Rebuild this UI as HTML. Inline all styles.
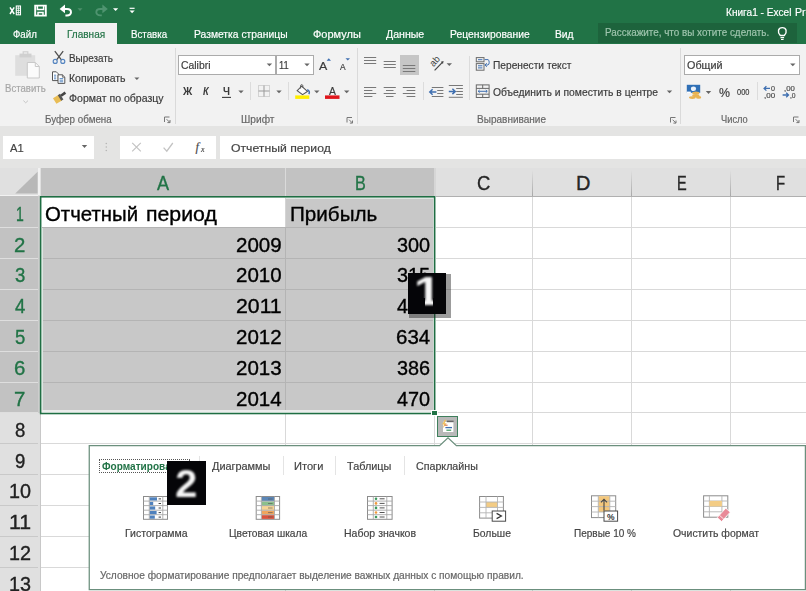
<!DOCTYPE html>
<html lang="ru"><head><meta charset="utf-8"><title>Excel</title>
<style>
html,body{margin:0;padding:0;}
body{width:806px;height:591px;overflow:hidden;background:#fff;font-family:"Liberation Sans",sans-serif;}
#root{position:relative;width:806px;height:591px;overflow:hidden;background:#fff;}
.t{position:absolute;white-space:nowrap;line-height:1;transform-origin:0 50%;font-family:"Liberation Sans",sans-serif;}
.b{position:absolute;}
svg{position:absolute;left:0;top:0;overflow:visible;}
.n{position:absolute;font-family:"Liberation Sans",sans-serif;font-weight:bold;font-size:40px;line-height:1;color:#f6f6f6;filter:blur(.9px);}

</style></head><body>
<div id="root">
<div class="b" style="left:0.00px;top:0.00px;width:806.00px;height:44.00px;background:#217346;"></div>
<div class="b" style="left:54.50px;top:23.00px;width:62.50px;height:21.50px;background:#f2f2f2;"></div>
<div class="b" style="left:598.00px;top:23.00px;width:198.50px;height:20.00px;background:#1d633c;"></div>
<div class="b" style="left:0.00px;top:44.00px;width:806.00px;height:82.00px;background:#f2f2f2;"></div>
<div class="b" style="left:0.00px;top:126.00px;width:806.00px;height:42.00px;background:#e4e4e3;"></div>
<div class="b" style="left:174.50px;top:48.00px;width:1.00px;height:76.00px;background:#dadada;"></div>
<div class="b" style="left:356.60px;top:48.00px;width:1.00px;height:76.00px;background:#dadada;"></div>
<div class="b" style="left:679.70px;top:48.00px;width:1.00px;height:76.00px;background:#dadada;"></div>
<div class="b" style="left:250.40px;top:82.00px;width:1.00px;height:18.00px;background:#dcdcdc;"></div>
<div class="b" style="left:288.40px;top:82.00px;width:1.00px;height:18.00px;background:#dcdcdc;"></div>
<div class="b" style="left:422.70px;top:82.00px;width:1.00px;height:18.00px;background:#dcdcdc;"></div>
<div class="b" style="left:469.00px;top:56.00px;width:1.00px;height:44.00px;background:#dcdcdc;"></div>
<div class="b" style="left:757.00px;top:82.00px;width:1.00px;height:18.00px;background:#dcdcdc;"></div>
<div class="b" style="left:178.00px;top:55.00px;width:97.50px;height:19.50px;background:#fff;box-sizing:border-box;border:1px solid #ababab;"></div>
<div class="b" style="left:276.00px;top:55.00px;width:37.50px;height:19.50px;background:#fff;box-sizing:border-box;border:1px solid #ababab;"></div>
<div class="b" style="left:684.30px;top:55.00px;width:115.70px;height:19.80px;background:#fff;box-sizing:border-box;border:1px solid #ababab;"></div>
<div class="b" style="left:399.60px;top:55.00px;width:19.00px;height:19.50px;background:#c6c6c6;"></div>
<div class="b" style="left:3.00px;top:136.00px;width:91.00px;height:22.50px;background:#fff;"></div>
<div class="b" style="left:120.00px;top:136.00px;width:96.00px;height:22.50px;background:#fff;"></div>
<div class="b" style="left:219.60px;top:136.00px;width:590.00px;height:22.50px;background:#fff;"></div>
<div class="b" style="left:0.00px;top:168.00px;width:806.00px;height:28.00px;background:#e0e0e0;"></div>
<div class="b" style="left:0.00px;top:196.00px;width:40.00px;height:400.00px;background:#e0e0e0;"></div>
<div class="b" style="left:38.20px;top:168.00px;width:2.30px;height:27.00px;background:#f2f2f2;"></div>
<div class="b" style="left:0.00px;top:194.80px;width:38.20px;height:1.20px;background:#f2f2f2;"></div>
<div class="b" style="left:40.50px;top:168.00px;width:393.60px;height:28.00px;background:#c2c2c2;"></div>
<div class="b" style="left:285.20px;top:168.00px;width:1.00px;height:28.00px;background:#dadada;"></div>
<div class="b" style="left:532.30px;top:170.00px;width:1.00px;height:26.00px;background:linear-gradient(#e0e0e0,#a8a8a8);"></div>
<div class="b" style="left:631.00px;top:170.00px;width:1.00px;height:26.00px;background:linear-gradient(#e0e0e0,#a8a8a8);"></div>
<div class="b" style="left:730.00px;top:170.00px;width:1.00px;height:26.00px;background:linear-gradient(#e0e0e0,#a8a8a8);"></div>
<div class="b" style="left:434.30px;top:168.00px;width:1.40px;height:28.00px;background:#d6d6d6;"></div>
<div class="b" style="left:435.50px;top:196.00px;width:371.00px;height:1.30px;background:#b0b0b0;"></div>
<div class="b" style="left:0.00px;top:196.00px;width:38.20px;height:217.00px;background:#c2c2c2;"></div>
<div class="b" style="left:38.20px;top:196.00px;width:2.00px;height:217.00px;background:#cdcdcd;"></div>
<div class="b" style="left:39.50px;top:413.00px;width:1.00px;height:180.00px;background:#c8c8c8;"></div>
<div class="b" style="left:0.00px;top:227.27px;width:38.20px;height:1.00px;background:#dedede;"></div>
<div class="b" style="left:0.00px;top:258.14px;width:38.20px;height:1.00px;background:#dedede;"></div>
<div class="b" style="left:0.00px;top:289.01px;width:38.20px;height:1.00px;background:#dedede;"></div>
<div class="b" style="left:0.00px;top:319.88px;width:38.20px;height:1.00px;background:#dedede;"></div>
<div class="b" style="left:0.00px;top:350.75px;width:38.20px;height:1.00px;background:#dedede;"></div>
<div class="b" style="left:0.00px;top:381.62px;width:38.20px;height:1.00px;background:#dedede;"></div>
<div class="b" style="left:0.00px;top:412.49px;width:38.20px;height:1.00px;background:#dedede;"></div>
<div class="b" style="left:0.00px;top:443.36px;width:38.20px;height:1.00px;background:#c9c9c9;"></div>
<div class="b" style="left:0.00px;top:474.23px;width:38.20px;height:1.00px;background:#c9c9c9;"></div>
<div class="b" style="left:0.00px;top:505.10px;width:38.20px;height:1.00px;background:#c9c9c9;"></div>
<div class="b" style="left:0.00px;top:535.97px;width:38.20px;height:1.00px;background:#c9c9c9;"></div>
<div class="b" style="left:0.00px;top:566.84px;width:38.20px;height:1.00px;background:#c9c9c9;"></div>
<div class="b" style="left:0.00px;top:597.71px;width:38.20px;height:1.00px;background:#c9c9c9;"></div>
<div class="b" style="left:40.50px;top:197.00px;width:766.00px;height:394.00px;background:#fff;"></div>
<div class="b" style="left:41.50px;top:198.00px;width:391.00px;height:212.50px;background:#c8c8c8;"></div>
<div class="b" style="left:41.50px;top:198.00px;width:243.70px;height:29.20px;background:#fff;"></div>
<div class="b" style="left:41.50px;top:227.27px;width:391.00px;height:1.00px;background:#b4b4b4;"></div>
<div class="b" style="left:435.50px;top:227.27px;width:371.00px;height:1.00px;background:#d9d9d9;"></div>
<div class="b" style="left:41.50px;top:258.14px;width:391.00px;height:1.00px;background:#b4b4b4;"></div>
<div class="b" style="left:435.50px;top:258.14px;width:371.00px;height:1.00px;background:#d9d9d9;"></div>
<div class="b" style="left:41.50px;top:289.01px;width:391.00px;height:1.00px;background:#b4b4b4;"></div>
<div class="b" style="left:435.50px;top:289.01px;width:371.00px;height:1.00px;background:#d9d9d9;"></div>
<div class="b" style="left:41.50px;top:319.88px;width:391.00px;height:1.00px;background:#b4b4b4;"></div>
<div class="b" style="left:435.50px;top:319.88px;width:371.00px;height:1.00px;background:#d9d9d9;"></div>
<div class="b" style="left:41.50px;top:350.75px;width:391.00px;height:1.00px;background:#b4b4b4;"></div>
<div class="b" style="left:435.50px;top:350.75px;width:371.00px;height:1.00px;background:#d9d9d9;"></div>
<div class="b" style="left:41.50px;top:381.62px;width:391.00px;height:1.00px;background:#b4b4b4;"></div>
<div class="b" style="left:435.50px;top:381.62px;width:371.00px;height:1.00px;background:#d9d9d9;"></div>
<div class="b" style="left:435.50px;top:412.49px;width:371.00px;height:1.00px;background:#d9d9d9;"></div>
<div class="b" style="left:40.50px;top:443.36px;width:766.00px;height:1.00px;background:#d9d9d9;"></div>
<div class="b" style="left:40.50px;top:474.23px;width:766.00px;height:1.00px;background:#d9d9d9;"></div>
<div class="b" style="left:40.50px;top:505.10px;width:766.00px;height:1.00px;background:#d9d9d9;"></div>
<div class="b" style="left:40.50px;top:535.97px;width:766.00px;height:1.00px;background:#d9d9d9;"></div>
<div class="b" style="left:40.50px;top:566.84px;width:766.00px;height:1.00px;background:#d9d9d9;"></div>
<div class="b" style="left:40.50px;top:597.71px;width:766.00px;height:1.00px;background:#d9d9d9;"></div>
<div class="b" style="left:285.20px;top:227.27px;width:1.00px;height:183.00px;background:#b4b4b4;"></div>
<div class="b" style="left:285.20px;top:414.00px;width:1.00px;height:180.00px;background:#d9d9d9;"></div>
<div class="b" style="left:285.20px;top:198.00px;width:1.00px;height:29.20px;background:#d4d4d4;"></div>
<div class="b" style="left:532.20px;top:197.00px;width:1.00px;height:394.00px;background:#d9d9d9;"></div>
<div class="b" style="left:631.00px;top:197.00px;width:1.00px;height:394.00px;background:#d9d9d9;"></div>
<div class="b" style="left:730.00px;top:197.00px;width:1.00px;height:394.00px;background:#d9d9d9;"></div>
<div class="b" style="left:433.60px;top:415.00px;width:1.00px;height:180.00px;background:#d9d9d9;"></div>
<div class="b" style="left:432.50px;top:198.00px;width:1.10px;height:213.00px;background:#e9e9e9;"></div>
<div class="b" style="left:41.50px;top:410.30px;width:392.00px;height:1.60px;background:#ececec;"></div>
<div class="b" style="left:286.20px;top:198.00px;width:146.50px;height:1.00px;background:#dde6e1;"></div>
<div class="b" style="left:41.50px;top:228.27px;width:1.00px;height:182.00px;background:#dde6e1;"></div>
<svg width="806" height="591" viewBox="0 0 806 591"><rect x="40.65" y="196.8" width="394" height="216.7" fill="none" stroke="#1f6e43" stroke-width="1.6"/></svg>
<div class="b" style="left:431.00px;top:410.00px;width:6.60px;height:6.20px;background:#fff;"></div>
<div class="b" style="left:432.10px;top:411.00px;width:4.50px;height:4.20px;background:#217346;"></div>
<div class="b" style="left:437.30px;top:416.20px;width:20.70px;height:21.00px;background:#b9b9b9;box-sizing:border-box;border:1.8px solid #3f7f5c;"></div>
<svg width="806" height="591" viewBox="0 0 806 591"><path d="M89.25 445.7 H439.6 L448 437.8 L456.4 445.7 H805.4 V589.6 H89.25 Z" fill="#fff" stroke="#6b8f7d" stroke-width="1.25"/></svg>
<div class="b" style="left:198.80px;top:455.50px;width:1.00px;height:19.00px;background:#e4e4e4;"></div>
<div class="b" style="left:282.60px;top:455.50px;width:1.00px;height:19.00px;background:#e4e4e4;"></div>
<div class="b" style="left:334.70px;top:455.50px;width:1.00px;height:19.00px;background:#e4e4e4;"></div>
<div class="b" style="left:403.60px;top:455.50px;width:1.00px;height:19.00px;background:#e4e4e4;"></div>
<div class="b" style="left:99.40px;top:458.60px;width:90.60px;height:14.40px;background:transparent;box-sizing:border-box;border:1px dotted #555;"></div><svg width="806" height="591" viewBox="0 0 806 591">
<!-- ===== quick access toolbar ===== -->
<g fill="none" stroke="#fff">
  <!-- excel logo -->
  <path d="M10 7.3 L14.2 14 M14.2 7.3 L10 14" stroke-width="1.5"/>
  <rect x="16.3" y="6" width="4.2" height="8.8" stroke-width="1.1"/>
  <path d="M16.3 8.2h4.2M16.3 10.4h4.2M16.3 12.6h4.2M18.4 6v8.8" stroke-width="0.8"/>
  <!-- save -->
  <path d="M35.2 5.6 H45.8 V15.6 H35.2 Z" stroke-width="1.9"/>
  <path d="M37.4 5.5 V9.4 H43.6 V5.5" stroke-width="1.5"/>
  <path d="M38 15.7 V12.4 H43 V15.7" stroke-width="1.5"/>
  <!-- undo -->
  <path d="M62 9 H67 C72.2 9 72.4 15.4 67 15.4 H65.4" stroke-width="2"/>
  <path d="M65 4.6 L59.6 9 L65 13.2 Z" fill="#fff" stroke="none"/>
  <!-- redo (dim) -->
  <path d="M105.4 9 H100.3 C95.1 9 94.9 15.4 100.3 15.4 H101.8" stroke="#4f9470" stroke-width="1.9"/>
  <path d="M102.4 4.6 L107.8 9 L102.4 13.2 Z" fill="#4f9470" stroke="none"/>
  <!-- customize -->
  <path d="M129.6 8.3 H134.6" stroke-width="1.2"/>
</g>
<path d="M77.5 8.3h5l-2.5 2.6z" fill="#4e8f6b"/>
<path d="M113 8.3h5.2l-2.6 2.7z" fill="#fff"/>
<path d="M129.5 10.6h5.2l-2.6 2.7z" fill="#fff"/>
<!-- light bulb -->
<g fill="none" stroke="#fff" stroke-width="1.4">
  <path d="M780.3 35.5 C777 32 778.2 27.6 782.3 27.6 C786.4 27.6 787.6 32 784.3 35.5 Z"/>
  <path d="M780.5 37.6h3.6M781 39.5h2.6" stroke-width="1.2"/>
</g>

<!-- ===== clipboard group ===== -->
<!-- paste (disabled) -->
<rect x="15.2" y="55.2" width="20" height="20.6" fill="#dedede"/>
<rect x="19.5" y="53.6" width="12" height="3.8" fill="#d0d0d0"/>
<rect x="23.2" y="51.8" width="4.6" height="3" fill="none" stroke="#d0d0d0" stroke-width="1.2"/>
<path d="M27.3 62.5 H35.3 L39.3 66.5 V78 H27.3 Z" fill="#fbfbfb" stroke="#c9c9c9" stroke-width="1"/>
<path d="M35.3 62.5 V66.5 H39.3" fill="none" stroke="#c9c9c9" stroke-width="1"/>
<path d="M23.4 100.6 L25.7 102.8 L28 100.6" fill="none" stroke="#c6c6c6" stroke-width="1"/>
<!-- scissors -->
<g fill="none">
  <path d="M54.8 51.2 L61.6 60.2 M63.2 51.2 L56.4 60.2" stroke="#505050" stroke-width="1.3"/>
  <circle cx="55.2" cy="61.4" r="2" stroke="#5585c0" stroke-width="1.15"/>
  <circle cx="62.8" cy="61.4" r="2" stroke="#5585c0" stroke-width="1.15"/>
</g>
<!-- copy -->
<g>
  <path d="M52.5 71.8 H56.3 L58.3 73.8 V80.6 H52.5 Z" fill="#fff" stroke="#555" stroke-width="1"/>
  <path d="M54 75.2h2.2M54 77h2.2M54 78.8h2.2" stroke="#4a7ebb" stroke-width="0.9"/>
  <path d="M58 74.8 H62.4 L64.8 77.2 V83.4 H58 Z" fill="#fff" stroke="#555" stroke-width="1"/>
  <path d="M62.4 74.8 V77.2 H64.8" fill="none" stroke="#555" stroke-width="0.8"/>
  <path d="M59.6 78.6h3.6M59.6 80.2h3.6M59.6 81.8h3.6" stroke="#4a7ebb" stroke-width="0.9"/>
</g>
<!-- format painter -->
<g>
  <path d="M53 98.2 L58.6 94.8 L62 100.4 L56.4 103.8 Z" fill="#e9bd55"/>
  <path d="M57.8 95.2 L60 93.8 L63.4 99.4 L61.2 100.8 Z" fill="#555"/>
  <path d="M61 95.8 L65.4 92.6" stroke="#444" stroke-width="2.6" fill="none"/>
</g>
<path d="M134.4 77.4h5l-2.5 2.6z" fill="#666"/>
<!-- dialog launchers -->
<g id="dl" fill="none" stroke="#777" stroke-width="1">
  <path d="M164.5 122 V117 H169.5"/>
  <path d="M166.6 119.2 L169.8 122.4 M170 120 V122.6 H167.4" />
</g>
<use href="#dl" x="182.5" y="0.5"/>
<use href="#dl" x="506" y="0.5"/>
<use href="#dl" x="629" y="0"/>
</svg>
<svg width="806" height="591" viewBox="0 0 806 591">
<defs>
  <path id="dd" d="M-2.7 -1.3h5.4l-2.7 2.8z" fill="#666"/>
</defs>
<!-- combo arrows -->
<use href="#dd" x="269.4" y="64.8"/>
<use href="#dd" x="307" y="64.8"/>
<use href="#dd" x="792.8" y="64.8"/>
<!-- grow/shrink blue triangles -->
<path d="M326.6 60.8 L331 60.8 L328.8 58.3 Z" fill="#3f6fb0"/>
<path d="M345.5 58.3 L350 58.3 L347.75 60.6 Z" fill="#3f6fb0"/>
<!-- underline for Ч -->
<path d="M222 97.4h9" stroke="#3b3b3b" stroke-width="1.1"/>
<use href="#dd" x="241" y="91.8"/>
<!-- borders icon -->
<g fill="none" stroke="#b4b4b4" stroke-width="1">
  <rect x="258.5" y="85.5" width="11" height="11" stroke-dasharray="1 1"/>
  <path d="M264 85.5v11M258.5 91h11" stroke="#9a9a9a"/>
</g>
<use href="#dd" x="279" y="91.8"/>
<!-- fill bucket -->
<g fill="none">
  <path d="M301.6 86.2 L307.4 91.4 L302.6 94.6 L297.2 90.6 Z" fill="#fdfdfd" stroke="#555" stroke-width="1.1"/>
  <path d="M300.6 88.5 V85.6 C300.6 84.4 302.8 84.4 302.8 85.6 V87.4" stroke="#555" stroke-width="1"/>
  <path d="M307.2 89.8 C309.6 90.6 309.8 92.6 308.8 94.2" stroke="#3f6fb0" stroke-width="1.5"/>
</g>
<rect x="295.2" y="95.4" width="14.1" height="3.5" fill="#ffee00"/>
<use href="#dd" x="316.8" y="91.8"/>
<rect x="325" y="95.4" width="14.5" height="3.5" fill="#e0161c"/>
<use href="#dd" x="346.7" y="91.8"/>

<!-- vertical align icons -->
<g stroke="#787878" stroke-width="1" fill="none">
  <path d="M364 57.5h12.2M364 60.5h12.2M364 63.5h12.2"/>
  <path d="M383.7 61.5h12.1M383.7 64.5h12.1M383.7 67.5h12.1"/>
  <path d="M402.8 65.5h12.5M402.8 68.5h12.5M402.8 71.5h12.5"/>
  <!-- horizontal align -->
  <path d="M364 87.5h12.2M364 90.5h8.4M364 93.5h12.2M364 96.5h8.4"/>
  <path d="M383.7 87.5h12.1M386 90.5h7.5M383.7 93.5h12.1M386 96.5h7.5"/>
  <path d="M402.8 87.5h12.5M406.6 90.5h8.7M402.8 93.5h12.5M406.6 96.5h8.7"/>
  <!-- decrease indent -->
  <path d="M431.8 87.5h11.6M437.2 90.5h6.2M437.2 93.5h6.2M431.8 96.5h11.6"/>
  <!-- increase indent -->
  <path d="M448.8 85.5h14.1M456.2 88.5h6.7M456.2 91.5h6.7M456.2 94.5h6.7M448.8 97.3h14.1"/>
</g>
<g stroke="#3f6fb0" stroke-width="1.5" fill="none">
  <path d="M436.4 92h-6.4M432.6 89.3l-2.8 2.7 2.8 2.7"/>
  <path d="M448.8 91.4h6.2M452.4 88.7l2.8 2.7-2.8 2.7"/>
</g>
<!-- orientation -->
<g>
  <text transform="translate(433.4 67.3) rotate(-48)" font-family="Liberation Sans, sans-serif" font-size="9.5" fill="#444">ab</text>
  <path d="M434.6 70.3 L442.6 62.2" stroke="#444" stroke-width="1.2" fill="none"/>
  <path d="M443.6 61 L443 64 L440.8 61.8 Z" fill="#444"/>
</g>
<use href="#dd" x="449.3" y="64.6"/>
<!-- wrap text -->
<g fill="none" stroke="#6a6a6a" stroke-width="1">
  <rect x="476.3" y="57.6" width="7.7" height="4.2"/>
  <rect x="476.3" y="63.6" width="7.7" height="6.6"/>
</g>
<g stroke="#3f6fb0" stroke-width="1" fill="none">
  <path d="M478 59.7h4.4M478 65.8h4.4M478 67.9h4.4"/>
  <path d="M484.6 59.6h3.4c1.6 0 1.6 5.4 0 5.4h-2.6M486.8 63.2l-1.9 1.8 1.9 1.8"/>
</g>
<!-- merge & center -->
<g fill="none" stroke="#686868" stroke-width="1">
  <rect x="476.3" y="84.9" width="12.8" height="12.6"/>
  <path d="M476.3 88.4h12.8M476.3 94.2h12.8M482.7 84.9v3.5M482.7 94.2v3.3"/>
</g>
<path d="M478.2 91.3h9M479.6 90l-1.4 1.3 1.4 1.3M485.8 90l1.4 1.3-1.4 1.3" stroke="#3f6fb0" stroke-width="1" fill="none"/>
<use href="#dd" x="669.5" y="91.8"/>

<!-- accounting -->
<rect x="686.8" y="84.8" width="13.4" height="8" fill="#2f6fb6"/>
<ellipse cx="693.5" cy="88.8" rx="2.6" ry="2.3" fill="#eaf1fa"/>
<rect x="686.8" y="91.6" width="4" height="1.4" fill="#fff"/>
<g fill="#e9b352">
  <ellipse cx="695.8" cy="93" rx="3.6" ry="1.5"/>
  <ellipse cx="695.8" cy="95.4" rx="3.6" ry="1.5"/>
  <ellipse cx="692.4" cy="97.6" rx="3.4" ry="1.4"/>
  <ellipse cx="698.6" cy="97.4" rx="2.6" ry="1.4"/>
</g>
<use href="#dd" x="708.5" y="92.4"/>
<!-- inc / dec decimal -->

<g stroke="#3f6fb0" stroke-width="1.3" fill="none">
  <path d="M770 88.4h-5.8M766.4 86.2l-2.3 2.2 2.3 2.2"/>
  <path d="M782.6 95h5.8M786.2 92.8l2.3 2.2-2.3 2.2"/>
</g>
<!-- formula bar icons -->
<use href="#dd" x="84.5" y="146.4"/>
<g fill="#b5b5b5"><circle cx="106.3" cy="143.5" r="0.8"/><circle cx="106.3" cy="147" r="0.8"/><circle cx="106.3" cy="150.5" r="0.8"/></g>
<path d="M132.2 142.8l8.6 8.6M140.8 142.8l-8.6 8.6" stroke="#c3c3c3" stroke-width="1.2" fill="none"/>
<path d="M163.6 147.6l3.2 3.6 6-8.2" stroke="#c3c3c3" stroke-width="1.3" fill="none"/>
<!-- corner triangle -->
<path d="M15.2 193.5 L37.6 193.5 L37.6 171.8 Z" fill="#b8b8b8"/>
</svg>
<svg width="806" height="591" viewBox="0 0 806 591">
<!-- quick analysis icon -->
<rect x="443" y="421.8" width="10.4" height="10.2" fill="#fff"/>
<rect x="446.8" y="420.6" width="6.8" height="1.6" fill="#666"/>
<path d="M444.8 419.8 L442 424.6 L444 424.6 L442.6 428.4 L446.8 423.2 L444.6 423.2 L446.4 419.8 Z" fill="#f0c060"/>
<path d="M445.4 427.6h6.6" stroke="#3f6fb0" stroke-width="1.3"/>
<path d="M446.4 430.2h4.8" stroke="#3c9a5c" stroke-width="1.2"/>
<path d="M444.6 425.2h3" stroke="#d0603c" stroke-width="1"/>

<!-- histogram icon -->
<g>
  <rect x="143.5" y="496.5" width="24" height="22.8" fill="#fff" stroke="#8c8c8c" stroke-width="1"/>
  <path d="M143.5 501.1h24M143.5 505.6h24M143.5 510.2h24M143.5 514.7h24M149.3 496.5v22.8M162.8 496.5v22.8" stroke="#a9a9a9" stroke-width="0.9" fill="none"/>
  <g fill="#4f81bd">
    <rect x="149.8" y="497.3" width="7.2" height="3.2"/>
    <rect x="149.8" y="501.9" width="3.4" height="3.2"/>
    <rect x="149.8" y="506.4" width="5.4" height="3.2"/>
    <rect x="149.8" y="511" width="6.8" height="3.2"/>
    <rect x="149.8" y="515.5" width="5" height="3.2"/>
  </g>
  <path d="M158.6 498.9h2.4M158.6 503.5h2.4M158.6 508h2.4M158.6 512.6h2.4M158.6 517.1h2.4" stroke="#444" stroke-width="1"/>
</g>
<!-- color scale icon -->
<g>
  <rect x="256.2" y="496.5" width="23.4" height="22.8" fill="#fff" stroke="#8c8c8c" stroke-width="1"/>
  <rect x="261.6" y="497" width="12.8" height="4.2" fill="#5b87b8"/>
  <rect x="261.6" y="501.5" width="12.8" height="4.2" fill="#8cc08c"/>
  <rect x="261.6" y="506" width="12.8" height="4.2" fill="#f7d595"/>
  <rect x="261.6" y="510.6" width="12.8" height="4.2" fill="#f0a55c"/>
  <rect x="261.6" y="515.1" width="12.8" height="3.8" fill="#d9533c"/>
  <path d="M256.2 501.1h23.4M256.2 505.6h23.4M256.2 510.2h23.4M256.2 514.7h23.4M261.4 496.5v22.8M274.5 496.5v22.8" stroke="#a9a9a9" stroke-width="0.9" fill="none"/>
  <path d="M268 499h4.6M268 503.5h4.6M268 508h4.6M268 512.6h4.6M268 517h4.6" stroke="#555" stroke-width="0.9" opacity="0.7"/>
</g>
<!-- icon set -->
<g>
  <rect x="367.5" y="496.5" width="24.6" height="22.8" fill="#fff" stroke="#8c8c8c" stroke-width="1"/>
  <path d="M367.5 501.1h24.6M367.5 505.6h24.6M367.5 510.2h24.6M367.5 514.7h24.6M373.3 496.5v22.8M386.8 496.5v22.8" stroke="#a9a9a9" stroke-width="0.9" fill="none"/>
  <circle cx="376" cy="498.8" r="1.3" fill="#3c9a5c"/>
  <circle cx="376" cy="503.4" r="1.3" fill="#f09a3c"/>
  <circle cx="376" cy="507.9" r="1.3" fill="#3c9a5c"/>
  <circle cx="376" cy="512.5" r="1.3" fill="#f09a3c"/>
  <circle cx="376" cy="517" r="1.3" fill="#3c9a5c"/>
  <path d="M379.6 498.8h5M379.6 503.4h5M379.6 507.9h5M379.6 512.5h5M379.6 517h5" stroke="#555" stroke-width="1"/>
</g>
<!-- greater than -->
<g>
  <rect x="479.6" y="496.5" width="23.8" height="21.6" fill="#fff" stroke="#8c8c8c" stroke-width="1"/>
  <rect x="486" y="502" width="11.5" height="5.4" fill="#f3cc85"/>
  <path d="M479.6 502h23.8M479.6 507.4h23.8M479.6 512.8h23.8M486 496.5v21.6M497.5 496.5v21.6" stroke="#b4b4b4" stroke-width="0.9" fill="none"/>
  <rect x="492.2" y="511" width="13.4" height="10.2" fill="#fff" stroke="#4a4a4a" stroke-width="1"/>
  <path d="M496.6 513.4 L501.4 516 L496.6 518.6" fill="none" stroke="#333" stroke-width="1.2"/>
</g>
<!-- top 10 % -->
<g>
  <rect x="591.5" y="495.8" width="24.2" height="21.8" fill="#fff" stroke="#8c8c8c" stroke-width="1"/>
  <rect x="598.3" y="496.2" width="11.5" height="15.8" fill="#f3c77c"/>
  <path d="M591.5 501.2h24.2M591.5 506.6h24.2M591.5 512h24.2M598.3 495.8v21.8M609.8 495.8v21.8" stroke="#b4b4b4" stroke-width="0.9" fill="none"/>
  <path d="M604 510.4V499.4M601 502.4l3-3.2 3 3.2" fill="none" stroke="#444" stroke-width="1.1"/>
  <rect x="604" y="511" width="13.6" height="10.2" fill="#fff" stroke="#4a4a4a" stroke-width="1"/>
  <text x="607" y="519.6" font-family="Liberation Sans, sans-serif" font-size="8.5" font-weight="bold" fill="#333">%</text>
</g>
<!-- clear format -->
<g>
  <rect x="703.6" y="495.8" width="24.2" height="21.4" fill="#fff" stroke="#8c8c8c" stroke-width="1"/>
  <path d="M703.6 501h24.2M703.6 506.4h24.2M703.6 511.8h24.2M709.4 495.8v21.4M721.9 495.8v21.4" stroke="#b4b4b4" stroke-width="0.9" fill="none"/>
  <rect x="709.4" y="500.9" width="12.5" height="5.5" fill="#f3cc85"/>
  <path d="M717.2 517.6 L725.8 508.2 L730.2 512.2 L721.6 521.6 Z" fill="#e88a98" stroke="#fff" stroke-width="0.8"/>
  <path d="M719.4 515.2 L723.8 519.2" stroke="#fff" stroke-width="0.8"/>
</g>
</svg>

<span class="t" id="t0" style="left:726.00px;top:7.07px;font-size:10.90px;color:#fff;-webkit-text-stroke:0.18px #fff;transform:scaleX(0.9262)">Книга1 - Excel</span>
<span class="t" id="t1" style="left:795.20px;top:7.07px;font-size:10.90px;color:#fff;-webkit-text-stroke:0.18px #fff;transform:scaleX(0.9710)">Pre</span>
<span class="t" id="t2" style="left:13.00px;top:28.81px;font-size:10.50px;color:#fff;-webkit-text-stroke:0.18px #fff;transform:scaleX(0.9226)">Файл</span>
<span class="t" id="t3" style="left:66.50px;top:28.81px;font-size:10.50px;color:#217346;-webkit-text-stroke:0.18px #217346;transform:scaleX(0.9547)">Главная</span>
<span class="t" id="t4" style="left:130.90px;top:28.81px;font-size:10.50px;color:#fff;-webkit-text-stroke:0.18px #fff;transform:scaleX(0.9263)">Вставка</span>
<span class="t" id="t5" style="left:193.70px;top:28.81px;font-size:10.50px;color:#fff;-webkit-text-stroke:0.18px #fff;transform:scaleX(0.9820)">Разметка страницы</span>
<span class="t" id="t6" style="left:313.00px;top:28.81px;font-size:10.50px;color:#fff;-webkit-text-stroke:0.18px #fff;transform:scaleX(1.0477)">Формулы</span>
<span class="t" id="t7" style="left:385.60px;top:28.81px;font-size:10.50px;color:#fff;-webkit-text-stroke:0.18px #fff;transform:scaleX(1.0080)">Данные</span>
<span class="t" id="t8" style="left:449.60px;top:28.81px;font-size:10.50px;color:#fff;-webkit-text-stroke:0.18px #fff;transform:scaleX(0.9848)">Рецензирование</span>
<span class="t" id="t9" style="left:555.00px;top:28.81px;font-size:10.50px;color:#fff;-webkit-text-stroke:0.18px #fff;transform:scaleX(0.9805)">Вид</span>
<span class="t" id="t10" style="left:604.50px;top:27.64px;font-size:10.00px;color:#9fc5ae;-webkit-text-stroke:0.18px #9fc5ae;transform:scaleX(0.9882)">Расскажите, что вы хотите сделать.</span>
<span class="t" id="t11" style="left:5.00px;top:83.46px;font-size:10.80px;color:#a6a6a6;-webkit-text-stroke:0.18px #a6a6a6;transform:scaleX(0.8886)">Вставить</span>
<span class="t" id="t12" style="left:69.10px;top:52.56px;font-size:10.80px;color:#3b3b3b;-webkit-text-stroke:0.18px #3b3b3b;transform:scaleX(0.9154)">Вырезать</span>
<span class="t" id="t13" style="left:68.80px;top:72.66px;font-size:10.80px;color:#3b3b3b;-webkit-text-stroke:0.18px #3b3b3b;transform:scaleX(0.9725)">Копировать</span>
<span class="t" id="t14" style="left:68.80px;top:92.76px;font-size:10.80px;color:#3b3b3b;-webkit-text-stroke:0.18px #3b3b3b;transform:scaleX(0.9773)">Формат по образцу</span>
<span class="t" id="t15" style="left:45.30px;top:114.78px;font-size:10.30px;color:#666;-webkit-text-stroke:0.18px #666;transform:scaleX(0.9539)">Буфер обмена</span>
<span class="t" id="t16" style="left:181.00px;top:59.56px;font-size:10.80px;color:#3b3b3b;-webkit-text-stroke:0.18px #3b3b3b;transform:scaleX(0.9636)">Calibri</span>
<span class="t" id="t17" style="left:278.50px;top:59.56px;font-size:10.80px;color:#3b3b3b;-webkit-text-stroke:0.18px #3b3b3b;transform:scaleX(0.8658)">11</span>
<span class="t" id="t18" style="left:183.45px;top:85.94px;font-size:10.70px;color:#3b3b3b;font-weight:bold;transform:scaleX(0.9545)">Ж</span>
<span class="t" id="t19" style="left:203.20px;top:85.94px;font-size:10.70px;color:#3b3b3b;font-weight:bold;font-style:italic;transform:scaleX(0.8625)">К</span>
<span class="t" id="t20" style="left:223.10px;top:85.94px;font-size:10.70px;color:#3b3b3b;font-weight:bold;transform:scaleX(0.9286)">Ч</span>
<span class="t" id="t21" style="left:241.00px;top:114.78px;font-size:10.30px;color:#666;-webkit-text-stroke:0.18px #666;transform:scaleX(0.9865)">Шрифт</span>
<span class="t" id="t22" style="left:493.20px;top:59.86px;font-size:10.80px;color:#3b3b3b;-webkit-text-stroke:0.18px #3b3b3b;transform:scaleX(0.9436)">Перенести текст</span>
<span class="t" id="t23" style="left:493.20px;top:87.46px;font-size:10.80px;color:#3b3b3b;-webkit-text-stroke:0.18px #3b3b3b;transform:scaleX(0.9565)">Объединить и поместить в центре</span>
<span class="t" id="t24" style="left:476.70px;top:114.78px;font-size:10.30px;color:#666;-webkit-text-stroke:0.18px #666;transform:scaleX(0.9740)">Выравнивание</span>
<span class="t" id="t25" style="left:686.90px;top:59.66px;font-size:10.80px;color:#3b3b3b;-webkit-text-stroke:0.18px #3b3b3b;transform:scaleX(0.9973)">Общий</span>
<span class="t" id="t26" style="left:719.00px;top:86.17px;font-size:13.50px;color:#3b3b3b;-webkit-text-stroke:0.18px #3b3b3b;transform:scaleX(0.9167)">%</span>
<span class="t" id="t27" style="left:736.70px;top:88.32px;font-size:8.60px;color:#3b3b3b;-webkit-text-stroke:0.18px #3b3b3b;transform:scaleX(0.8655)">000</span>
<span class="t" id="t28" style="left:721.00px;top:114.78px;font-size:10.30px;color:#666;-webkit-text-stroke:0.18px #666;transform:scaleX(0.9034)">Число</span>
<span class="t" id="t29" style="left:319.40px;top:60.61px;font-size:11.80px;color:#3b3b3b;-webkit-text-stroke:0.18px #3b3b3b;transform:scaleX(1.0500)">A</span>
<span class="t" id="t30" style="left:339.80px;top:62.81px;font-size:9.20px;color:#3b3b3b;-webkit-text-stroke:0.18px #3b3b3b;transform:scaleX(0.9143)">A</span>
<span class="t" id="t31" style="left:328.70px;top:86.15px;font-size:11.40px;color:#3b3b3b;-webkit-text-stroke:0.18px #3b3b3b;transform:scaleX(0.9125)">A</span>
<span class="t" id="t32" style="left:771.20px;top:84.60px;font-size:7.80px;color:#4a4a4a;-webkit-text-stroke:0.18px #4a4a4a;transform:scaleX(0.9200)">0</span>
<span class="t" id="t33" style="left:764.20px;top:92.40px;font-size:7.80px;color:#4a4a4a;-webkit-text-stroke:0.18px #4a4a4a;transform:scaleX(1.0259)">,00</span>
<span class="t" id="t34" style="left:784.40px;top:84.60px;font-size:7.80px;color:#4a4a4a;-webkit-text-stroke:0.18px #4a4a4a;transform:scaleX(0.9911)">,00</span>
<span class="t" id="t35" style="left:789.80px;top:92.40px;font-size:7.80px;color:#4a4a4a;-webkit-text-stroke:0.18px #4a4a4a;transform:scaleX(0.8652)">,0</span>
<span class="t" id="t36" style="left:195.60px;top:140.62px;font-size:12.50px;color:#4a4a4a;font-family:'Liberation Serif',serif;font-style:italic;-webkit-text-stroke:0.18px #4a4a4a;transform:scaleX(1.0000)">f</span>
<span class="t" id="t37" style="left:200.52px;top:144.60px;font-size:8.50px;color:#4a4a4a;font-family:'Liberation Serif',serif;font-style:italic;-webkit-text-stroke:0.18px #4a4a4a;transform:scaleX(0.9200)">x</span>
<span class="t" id="t38" style="left:10.00px;top:143.32px;font-size:11.20px;color:#444;-webkit-text-stroke:0.18px #444;transform:scaleX(1.0028)">A1</span>
<span class="t" id="t39" style="left:230.50px;top:143.32px;font-size:11.20px;color:#444;-webkit-text-stroke:0.18px #444;transform:scaleX(1.0910)">Отчетный период</span>
<span class="t" id="t40" style="left:157.10px;top:172.57px;font-size:20.00px;color:#217346;-webkit-text-stroke:0.35px #217346;transform:scaleX(0.9071)">A</span>
<span class="t" id="t41" style="left:354.69px;top:172.57px;font-size:20.00px;color:#217346;-webkit-text-stroke:0.35px #217346;transform:scaleX(0.8083)">B</span>
<span class="t" id="t42" style="left:477.08px;top:172.57px;font-size:20.00px;color:#262626;-webkit-text-stroke:0.35px #262626;transform:scaleX(0.9231)">C</span>
<span class="t" id="t43" style="left:576.00px;top:172.57px;font-size:20.00px;color:#262626;-webkit-text-stroke:0.35px #262626;transform:scaleX(1.0000)">D</span>
<span class="t" id="t44" style="left:676.67px;top:172.57px;font-size:20.00px;color:#262626;-webkit-text-stroke:0.35px #262626;transform:scaleX(0.7250)">E</span>
<span class="t" id="t45" style="left:775.55px;top:172.57px;font-size:20.00px;color:#262626;-webkit-text-stroke:0.35px #262626;transform:scaleX(0.7455)">F</span>
<span class="t" id="t46" style="left:15.90px;top:203.71px;font-size:20.00px;color:#217346;-webkit-text-stroke:0.35px #217346;transform:scaleX(0.7000)">1</span>
<span class="t" id="t47" style="left:14.18px;top:234.58px;font-size:20.00px;color:#217346;-webkit-text-stroke:0.35px #217346;transform:scaleX(1.0200)">2</span>
<span class="t" id="t48" style="left:15.20px;top:265.44px;font-size:20.00px;color:#217346;-webkit-text-stroke:0.35px #217346;transform:scaleX(0.9273)">3</span>
<span class="t" id="t49" style="left:15.20px;top:296.31px;font-size:20.00px;color:#217346;-webkit-text-stroke:0.35px #217346;transform:scaleX(0.9273)">4</span>
<span class="t" id="t50" style="left:15.20px;top:327.19px;font-size:20.00px;color:#217346;-webkit-text-stroke:0.35px #217346;transform:scaleX(0.9273)">5</span>
<span class="t" id="t51" style="left:14.18px;top:358.06px;font-size:20.00px;color:#217346;-webkit-text-stroke:0.35px #217346;transform:scaleX(1.0200)">6</span>
<span class="t" id="t52" style="left:14.18px;top:388.93px;font-size:20.00px;color:#217346;-webkit-text-stroke:0.35px #217346;transform:scaleX(1.0200)">7</span>
<span class="t" id="t53" style="left:15.20px;top:419.80px;font-size:20.00px;color:#222;-webkit-text-stroke:0.35px #222;transform:scaleX(0.9273)">8</span>
<span class="t" id="t54" style="left:15.20px;top:450.66px;font-size:20.00px;color:#222;-webkit-text-stroke:0.35px #222;transform:scaleX(0.9273)">9</span>
<span class="t" id="t55" style="left:9.21px;top:480.53px;font-size:20.00px;color:#222;-webkit-text-stroke:0.35px #222;transform:scaleX(0.9894)">10</span>
<span class="t" id="t56" style="left:9.14px;top:512.40px;font-size:20.00px;color:#222;-webkit-text-stroke:0.35px #222;transform:scaleX(1.0642)">11</span>
<span class="t" id="t57" style="left:9.21px;top:543.28px;font-size:20.00px;color:#222;-webkit-text-stroke:0.35px #222;transform:scaleX(0.9894)">12</span>
<span class="t" id="t58" style="left:9.21px;top:574.14px;font-size:20.00px;color:#222;-webkit-text-stroke:0.35px #222;transform:scaleX(0.9894)">13</span>
<span class="t" id="t59" style="left:45.20px;top:203.57px;font-size:20.00px;color:#000;-webkit-text-stroke:0.35px #000;transform:scaleX(1.0191)">Отчетный</span>
<span class="t" id="t60" style="left:146.24px;top:203.57px;font-size:20.00px;color:#000;-webkit-text-stroke:0.35px #000;transform:scaleX(1.0647)">период</span>
<span class="t" id="t61" style="left:289.97px;top:203.57px;font-size:20.00px;color:#000;-webkit-text-stroke:0.35px #000;transform:scaleX(1.0316)">Прибыль</span>
<span class="t" id="t62" style="left:236.07px;top:234.58px;font-size:20.00px;color:#000;-webkit-text-stroke:0.35px #000;transform:scaleX(1.0261)">2009</span>
<span class="t" id="t63" style="left:396.60px;top:234.58px;font-size:20.00px;color:#000;-webkit-text-stroke:0.35px #000;transform:scaleX(0.9926)">300</span>
<span class="t" id="t64" style="left:236.07px;top:265.44px;font-size:20.00px;color:#000;-webkit-text-stroke:0.35px #000;transform:scaleX(1.0261)">2010</span>
<span class="t" id="t65" style="left:396.60px;top:265.44px;font-size:20.00px;color:#000;-webkit-text-stroke:0.35px #000;transform:scaleX(0.9926)">315</span>
<span class="t" id="t66" style="left:236.04px;top:296.31px;font-size:20.00px;color:#000;-webkit-text-stroke:0.35px #000;transform:scaleX(1.0624)">2011</span>
<span class="t" id="t67" style="left:396.60px;top:296.31px;font-size:20.00px;color:#000;-webkit-text-stroke:0.35px #000;transform:scaleX(0.9926)">403</span>
<span class="t" id="t68" style="left:236.07px;top:327.19px;font-size:20.00px;color:#000;-webkit-text-stroke:0.35px #000;transform:scaleX(1.0261)">2012</span>
<span class="t" id="t69" style="left:395.58px;top:327.19px;font-size:20.00px;color:#000;-webkit-text-stroke:0.35px #000;transform:scaleX(1.0234)">634</span>
<span class="t" id="t70" style="left:236.07px;top:358.06px;font-size:20.00px;color:#000;-webkit-text-stroke:0.35px #000;transform:scaleX(1.0261)">2013</span>
<span class="t" id="t71" style="left:396.60px;top:358.06px;font-size:20.00px;color:#000;-webkit-text-stroke:0.35px #000;transform:scaleX(0.9926)">386</span>
<span class="t" id="t72" style="left:236.07px;top:388.93px;font-size:20.00px;color:#000;-webkit-text-stroke:0.35px #000;transform:scaleX(1.0261)">2014</span>
<span class="t" id="t73" style="left:396.60px;top:388.93px;font-size:20.00px;color:#000;-webkit-text-stroke:0.35px #000;transform:scaleX(0.9926)">470</span>
<span class="t" id="t74" style="left:101.50px;top:462.05px;font-size:10.10px;color:#217346;font-weight:bold;transform:scaleX(0.9974)">Форматирование</span>
<span class="t" id="t75" style="left:212.30px;top:462.08px;font-size:10.30px;color:#444;-webkit-text-stroke:0.18px #444;transform:scaleX(1.0580)">Диаграммы</span>
<span class="t" id="t76" style="left:294.00px;top:462.08px;font-size:10.30px;color:#444;-webkit-text-stroke:0.18px #444;transform:scaleX(1.0770)">Итоги</span>
<span class="t" id="t77" style="left:347.00px;top:462.08px;font-size:10.30px;color:#444;-webkit-text-stroke:0.18px #444;transform:scaleX(1.0565)">Таблицы</span>
<span class="t" id="t78" style="left:415.90px;top:462.08px;font-size:10.30px;color:#444;-webkit-text-stroke:0.18px #444;transform:scaleX(1.0361)">Спарклайны</span>
<span class="t" id="t79" style="left:125.00px;top:529.18px;font-size:10.30px;color:#444;-webkit-text-stroke:0.18px #444;transform:scaleX(1.0196)">Гистограмма</span>
<span class="t" id="t80" style="left:229.00px;top:529.18px;font-size:10.30px;color:#444;-webkit-text-stroke:0.18px #444;transform:scaleX(0.9946)">Цветовая шкала</span>
<span class="t" id="t81" style="left:344.00px;top:529.18px;font-size:10.30px;color:#444;-webkit-text-stroke:0.18px #444;transform:scaleX(1.0226)">Набор значков</span>
<span class="t" id="t82" style="left:472.80px;top:529.18px;font-size:10.30px;color:#444;-webkit-text-stroke:0.18px #444;transform:scaleX(1.0082)">Больше</span>
<span class="t" id="t83" style="left:573.70px;top:529.18px;font-size:10.30px;color:#444;-webkit-text-stroke:0.18px #444;transform:scaleX(0.9713)">Первые 10 %</span>
<span class="t" id="t84" style="left:672.70px;top:529.18px;font-size:10.30px;color:#444;-webkit-text-stroke:0.18px #444;transform:scaleX(1.0131)">Очистить формат</span>
<span class="t" id="t85" style="left:99.80px;top:570.85px;font-size:10.10px;color:#666;-webkit-text-stroke:0.18px #666;transform:scaleX(1.0076)">Условное форматирование предполагает выделение важных данных с помощью правил.</span>
<div class="b" style="left:408.6px;top:273.6px;width:42.2px;height:44.2px;background:rgba(40,40,40,.46);filter:blur(.5px);"></div>
<div class="b" style="left:408.4px;top:273.2px;width:37.6px;height:40.9px;background:#050508;"></div>
<span class="n" style="left:413.9px;top:272px;font-size:40.2px;transform:scaleX(1.2);transform-origin:0 50%;">1</span>
<div class="b" style="left:414px;top:297.6px;width:10.6px;height:12px;background:#050508;"></div>
<div class="b" style="left:432.6px;top:297.6px;width:10px;height:12px;background:#050508;"></div>
<div class="b" style="left:166.8px;top:461px;width:39px;height:43.5px;background:#050508;"></div>
<span class="n" style="left:175.2px;top:463.6px;font-size:39.6px;transform:scaleX(1.0);transform-origin:0 50%;">2</span>

</div>
</body></html>
